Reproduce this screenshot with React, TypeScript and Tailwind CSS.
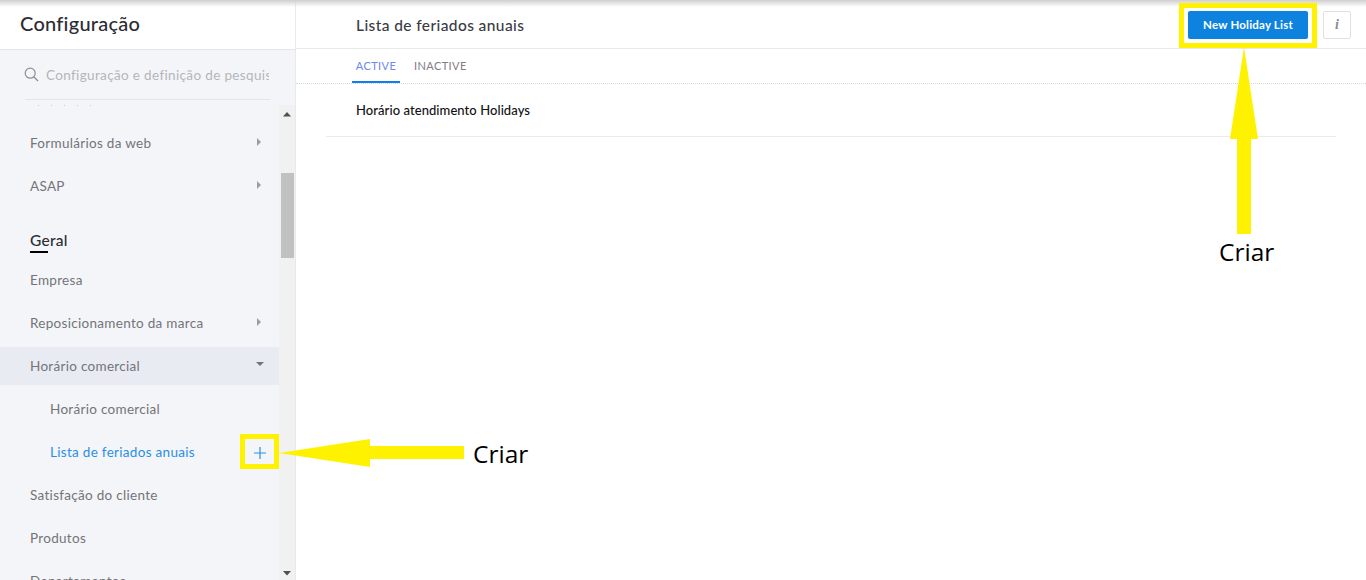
import React from "react";

const font = { fontFamily: '"Lato", "Noto Sans", sans-serif' };

function Caret({ open = false }: { open?: boolean }) {
  return (
    <svg width="10" height="10" viewBox="0 0 10 10" className="shrink-0">
      {open ? <path d="M1 3h8L5 7z" fill="#70747c" /> : <path d="M3 1v8l4-4z" fill="#9a9da3" />}
    </svg>
  );
}

function Row({ label, caret, active, sub, blue, plus }: { label: string; caret?: "r" | "d"; active?: boolean; sub?: boolean; blue?: boolean; plus?: boolean }) {
  return (
    <div className={`flex shrink-0 items-center pr-[15px] ${sub ? "pl-[50px]" : "pl-[30px]"} ${active ? "mb-[3px] mt-[2px] h-[38px] bg-[#e8ebf2]" : "h-[43px]"}`}>
      <span className={`flex-1 text-[13.5px] tracking-[0.3px] ${blue ? "text-[#2a8fe6]" : "text-[#737478]"}`}>{label}</span>
      {caret && <span className={active ? "-mr-[1px] -mt-[5px]" : "-mt-[3px]"}><Caret open={caret === "d"} /></span>}
      {plus && (
        <svg width="14" height="14" viewBox="0 0 14 14" className="mr-[-3px]">
          <path d="M7 1v12M1 7h12" stroke="#2a8fe6" strokeWidth="1.2" />
        </svg>
      )}
    </div>
  );
}

export default function App() {
  return (
    <div className="relative flex h-[580px] w-[1366px] overflow-hidden bg-white text-[#333]" style={font}>
      <aside className="flex h-full w-[296px] shrink-0 flex-col border-r border-[#e9e9ec] bg-[#f3f5f9]">
        <div className="flex h-[50px] shrink-0 items-center border-b border-[#e4e6ea] bg-white pb-[4px] pl-[20px] text-[20px] font-medium tracking-[0.25px] text-[#2c2c34]">
          Configuração
        </div>
        <div className="mx-[25px] mb-[5px] flex h-[50px] shrink-0 items-center gap-[7px] border-b border-[#e2e4ea] pt-[2px]">
          <svg width="15" height="15" viewBox="0 0 15 15" fill="none" stroke="#8d8f94" strokeWidth="1.2" className="-mt-[2px] -ml-[1px]">
            <circle cx="6.2" cy="6.2" r="5" />
            <path d="M10 10l4 4" />
          </svg>
          <span className="w-[223px] overflow-hidden whitespace-nowrap text-[13.5px] tracking-[0.35px] text-[#b4b6bb]">Configuração e definição de pesquisa</span>
        </div>
        <div className="flex min-h-0 flex-1">
          <div className="flex min-w-0 flex-1 flex-col overflow-hidden">
            <div className="flex h-[17px] shrink-0 items-start gap-[12px] pl-[38px]">
              {[0, 1, 2, 3, 4].map((i) => (
                <span key={i} className="h-px w-px bg-[#c9cbd0]" />
              ))}
            </div>
            <Row label="Formulários da web" caret="r" />
            <Row label="ASAP" caret="r" />
            <div className="flex h-[51px] shrink-0 flex-col justify-end pb-[9px] pl-[30px]">
              <span className="relative w-fit text-[15.5px] font-medium leading-[20px] tracking-[0.25px] text-[#2c2c34]">
                Geral
                <span className="absolute bottom-[-3px] left-0 h-[2px] w-[18px] bg-black" />
              </span>
            </div>
            <Row label="Empresa" />
            <Row label="Reposicionamento da marca" caret="r" />
            <Row label="Horário comercial" caret="d" active />
            <Row label="Horário comercial" sub />
            <Row label="Lista de feriados anuais" sub blue plus />
            <Row label="Satisfação do cliente" />
            <Row label="Produtos" />
            <Row label="Departamentos" />
          </div>
          <div className="flex w-[16px] shrink-0 flex-col items-center bg-[#f1f1f1]">
            <svg width="10" height="17" viewBox="0 0 10 17" className="shrink-0"><path d="M1 11.5h8L5 7z" fill="#505050" /></svg>
            <div className="mt-[51px] h-[85px] w-[13px] shrink-0 bg-[#c1c1c1]" />
            <div className="flex-1" />
            <svg width="10" height="17" viewBox="0 0 10 17" className="shrink-0"><path d="M1 8h8l-4 4.5z" fill="#505050" /></svg>
          </div>
        </div>
      </aside>

      <main className="flex min-w-0 flex-1 flex-col">
        <header className="flex h-[49px] shrink-0 items-center border-b border-[#e8e8ea] pl-[60px] pr-[15px]">
          <h1 className="flex-1 pt-[3px] text-[15.5px] font-medium tracking-[0.4px] text-[#3b3b45]">Lista de feriados anuais</h1>
          <button className="mt-[1px] flex h-[28px] w-[120px] items-center justify-center rounded-[2px] bg-[#0d82de] text-[11.5px] font-bold tracking-[0.2px] text-white">New Holiday List</button>
          <button className="ml-[15px] mt-[1px] flex h-[28px] w-[28px] items-center justify-center rounded-[2px] border border-[#e0e0e2] font-['Liberation_Serif',serif] text-[14px] font-bold italic text-[#8a8a8f]">i</button>
        </header>
        <nav className="flex h-[35px] shrink-0 border-b border-dotted border-[#d9d9db] pl-[56px]">
          <div className="flex h-[34px] w-[48px] items-center justify-center border-b-2 border-[#0d7ff0] pt-[2px] text-[11px] tracking-[0.4px] text-[#6d86f0]">ACTIVE</div>
          <div className="ml-[14px] flex h-[34px] items-center text-[11px] tracking-[0.4px] text-[#837b86]">INACTIVE</div>
        </nav>
        <div className="mx-[30px] flex h-[53px] items-center border-b border-[#ebebed] pl-[30px] pt-[1px] text-[13px] font-medium tracking-[0.07px] text-[#111]">
          Horário atendimento Holidays
        </div>
      </main>

      {/* Screenshot annotations lying over the page */}
      <div className="absolute inset-x-0 top-0 h-[7px] bg-gradient-to-b from-[#cfcfcf] to-transparent" />
      <div className="absolute left-[1179px] top-[3px] h-[45px] w-[138px] border-[5px] border-[#fff200]" />
      <div className="absolute left-[240px] top-[434px] h-[35px] w-[39px] border-[5px] border-[#fff200]" />
      <svg className="absolute left-[1230px] top-[47px]" width="28" height="187" viewBox="0 0 28 187">
        <path d="M14 0L28 92H21V187H7V92H0z" fill="#fff200" />
      </svg>
      <svg className="absolute left-[279px] top-[439px]" width="185" height="28" viewBox="0 0 185 28">
        <path d="M0 14L91 0V7H185V20H91V28z" fill="#fff200" />
      </svg>
      <span className="absolute left-[1219px] top-[234px] font-['Open_Sans',sans-serif] text-[24.5px] leading-[36px] text-black">Criar</span>
      <span className="absolute left-[473px] top-[436px] font-['Open_Sans',sans-serif] text-[24.5px] leading-[36px] text-black">Criar</span>
    </div>
  );
}
